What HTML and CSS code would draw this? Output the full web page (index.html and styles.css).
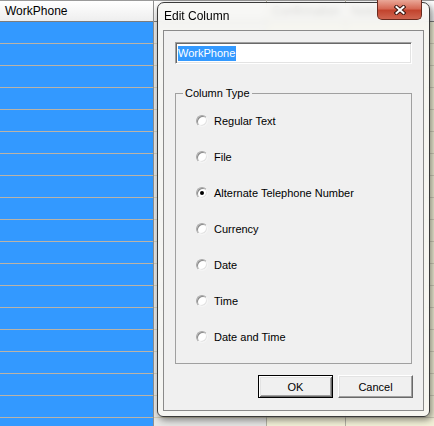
FILE: index.html
```html
<!DOCTYPE html>
<html lang="en">
<head>
  <meta charset="UTF-8" />
  <title>Edit Column</title>
  <link rel="stylesheet" href="styles.css">
</head>
<body>

<div class="screen">

  <!-- table behind the dialog -->
  <div class="grid-left">
    <div class="head">WorkPhone</div>
    <div class="row"></div>
    <div class="row"></div>
    <div class="row"></div>
    <div class="row"></div>
    <div class="row"></div>
    <div class="row"></div>
    <div class="row"></div>
    <div class="row"></div>
    <div class="row"></div>
    <div class="row"></div>
    <div class="row"></div>
    <div class="row"></div>
    <div class="row"></div>
    <div class="row"></div>
    <div class="row"></div>
    <div class="row"></div>
    <div class="row"></div>
    <div class="row"></div>
    <div class="row"></div>
  </div>

  <div class="grid-right">
    <div class="col col-b"><div class="head"></div><div class="cells"></div></div>
    <div class="col col-c"><div class="head">Confirmation</div><div class="cells"></div></div>
    <div class="col col-d"><div class="head">Notes</div><div class="cells"></div></div>
  </div>

  <!-- dialog window -->
  <div class="dialog">
    <div class="titlebar">
      <span class="title">Edit Column</span>
      <button class="close" type="button">
        <svg width="12" height="10" viewBox="0 0 12 10">
          <path d="M2.5 2 L9.5 8 M9.5 2 L2.5 8" stroke="#3b1610" stroke-width="4" stroke-linecap="square"/>
          <path d="M2.5 2 L9.5 8 M9.5 2 L2.5 8" stroke="#fff" stroke-width="2" stroke-linecap="square"/>
        </svg>
      </button>
    </div>

    <div class="client">
      <div class="name-box"><span class="sel">WorkPhone</span></div>

      <fieldset class="group">
        <legend>Column Type</legend>
        <label class="opt"><span class="radio"></span>Regular Text</label>
        <label class="opt"><span class="radio"></span>File</label>
        <label class="opt"><span class="radio on"></span>Alternate Telephone Number</label>
        <label class="opt"><span class="radio"></span>Currency</label>
        <label class="opt"><span class="radio"></span>Date</label>
        <label class="opt"><span class="radio"></span>Time</label>
        <label class="opt"><span class="radio"></span>Date and Time</label>
      </fieldset>

      <div class="buttons">
        <button class="btn default" type="button">OK</button>
        <button class="btn" type="button">Cancel</button>
      </div>
    </div>
  </div>

</div>

</body>
</html>
```

FILE: styles.css
```css
body {
  margin: 0;
  font-family: "Liberation Sans", Arial, sans-serif;
  overflow: hidden;
}

.screen {
  position: relative;
  display: flex;
  width: 434px;
  height: 426px;
  overflow: hidden;
  background-color: #f3f1d8;
}

/* ---- grid behind ---- */

.head {
  height: 20px;
  border-top: 1px solid #9a9a9a;
  border-bottom: 1px solid #7c7c7c;
  background: linear-gradient(#ffffff, #eeeeee);
  font-size: 12px;
  line-height: 20px;
  padding-left: 5px;
  color: #000;
  white-space: nowrap;
  overflow: hidden;
}

.grid-left {
  width: 153px;
  flex: none;
  border-right: 1px solid #8f8f8f;
}

.row {
  height: 21px;
  background-color: #3399ff;
  border-bottom: 1px solid #bbb3a6;
}

.grid-right {
  flex: 1;
  display: flex;
}

.col {
  display: flex;
  flex-direction: column;
  border-right: 1px solid #b4b2a4;
}

.col-b { width: 112px; }
.col-c { width: 78px; }
.col-d { flex: 1; border-right: none; }

.cells {
  flex: 1;
  background: repeating-linear-gradient(to bottom, transparent 0 21px, #d2cfbb 21px 22px);
}

.col-b .cells {
  background-color: #e6e6e4;
}

/* ---- dialog ---- */

.dialog {
  position: absolute;
  left: 157px;
  top: 2px;
  width: 273px;
  height: 415px;
  box-sizing: border-box;
  display: flex;
  flex-direction: column;
  padding: 0 5px 5px 5px;
  border: 1px solid #3a3a3a;
  border-radius: 7px 7px 6px 6px;
  background-color: rgba(247, 247, 245, 0.86);
  backdrop-filter: blur(3px);
  box-shadow: 2px 3px 7px rgba(0, 0, 0, 0.45);
}

.titlebar {
  height: 27px;
  display: flex;
  justify-content: space-between;
  align-items: flex-start;
}

.title {
  font-size: 12px;
  line-height: 15px;
  padding: 6px 0 0 1px;
  color: #000;
}

.close {
  width: 45px;
  height: 20px;
  margin: -3px 2px 0 0;
  padding: 0;
  display: flex;
  align-items: center;
  justify-content: center;
  border: 1px solid #6a2a1e;
  border-top: none;
  border-radius: 0 0 5px 5px;
  background: linear-gradient(#eaa898, #d66a56 45%, #c2442e 55%, #cf6550);
}

.client {
  flex: 1;
  display: flex;
  flex-direction: column;
  border: 1px solid #8a8a8a;
  background-color: #f0f0f0;
  padding: 11px;
  font-size: 11px;
  color: #000;
}

.name-box {
  height: 22px;
  box-sizing: border-box;
  display: flex;
  align-items: center;
  padding-left: 1px;
  border: 1px solid;
  border-color: #a0a0a0 #ffffff #ffffff #a0a0a0;
  box-shadow: inset 1px 1px 0 #696969, inset -1px -1px 0 #e3e3e3;
  background-color: #fff;
}

.sel {
  margin-left: 1px;
  background-color: #3399ff;
  color: #fff;
  line-height: 15px;
  padding-right: 1px;
}

.group {
  margin: 23px 0 0;
  padding: 3px 0 8px;
  min-width: 0;
  border: 1px solid #a0a0a0;
}

.group legend {
  margin-left: 7px;
  padding: 0 2px;
  line-height: 13px;
}

.opt {
  display: flex;
  align-items: center;
  gap: 6px;
  height: 36px;
  padding-left: 20px;
}

.radio {
  width: 12px;
  height: 12px;
  flex: none;
  box-sizing: border-box;
  display: grid;
  place-items: center;
  border-radius: 50%;
  border: 1px solid;
  border-color: #a8a8a8 #f4f4f4 #f4f4f4 #a8a8a8;
  box-shadow: inset 1px 1px 0 #8a8a8a, inset -1px -1px 0 #e3e3e3;
  background-color: #fff;
}

.radio.on::after {
  content: "";
  width: 4px;
  height: 4px;
  border-radius: 50%;
  background-color: #000;
}

.buttons {
  display: flex;
  justify-content: flex-end;
  gap: 5px;
  margin: 11px -1px 0 0;
}

.btn {
  width: 75px;
  height: 23px;
  padding: 0;
  font-family: "Liberation Sans", Arial, sans-serif;
  font-size: 11px;
  color: #000;
  background-color: #f0f0f0;
  border: 1px solid;
  border-color: #ffffff #696969 #696969 #ffffff;
  box-shadow: inset -1px -1px 0 #a0a0a0, inset 1px 1px 0 #e3e3e3;
}

.btn.default {
  border-color: #000;
  box-shadow: inset 1px 1px 0 #fff, inset -1px -1px 0 #696969,
              inset 2px 2px 0 #e3e3e3, inset -2px -2px 0 #a0a0a0;
}
```
